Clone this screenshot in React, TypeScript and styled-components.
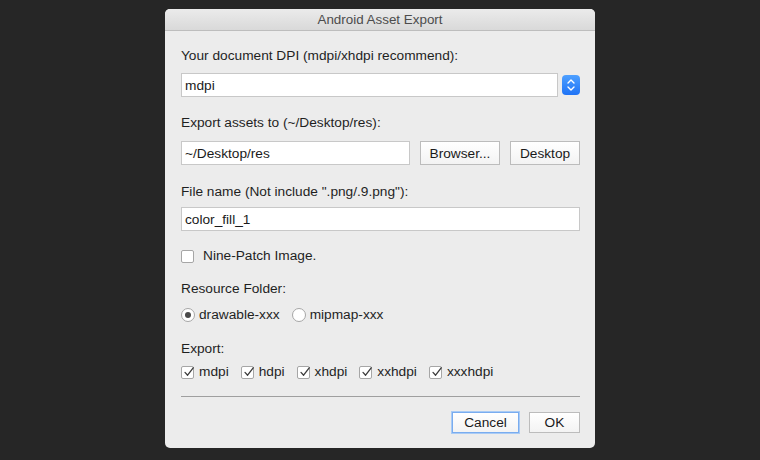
import React from 'react';
import styled, {createGlobalStyle} from 'styled-components';

const GlobalStyle = createGlobalStyle`
  html, body {
    margin: 0;
    padding: 0;
    background: #262626;
    height: 460px;
    overflow: hidden;
  }
  body {
    font-family: "Liberation Sans", Arial, sans-serif;
  }
`;

const Page = styled.div`
  display: flex;
  justify-content: center;
  padding-top: 9px;
`;

const Dialog = styled.div`
  width: 430px;
  height: 439px;
  background: #ececec;
  border-radius: 5px;
  overflow: hidden;
  display: flex;
  flex-direction: column;
`;

const TitleBar = styled.div`
  height: 21px;
  background: linear-gradient(#ebebeb, #d9d9d9);
  border-bottom: 1px solid #bdbdbd;
  display: flex;
  align-items: center;
  justify-content: center;
  font-size: 13.4px;
  color: #4c4c4c;
`;

const Body = styled.div`
  padding: 0 15px 0 16px;
  display: flex;
  flex-direction: column;
  color: #1f1f1f;
  font-size: 13.7px;
`;

const Label = styled.div<{$top: number}>`
  margin-top: ${p => p.$top}px;
  line-height: 16px;
  height: 16px;
`;

const Row = styled.div<{$top: number}>`
  margin-top: ${p => p.$top}px;
  display: flex;
  align-items: center;
`;

const TextField = styled.div<{$width?: number}>`
  box-sizing: border-box;
  height: 24px;
  ${p => (p.$width ? `width: ${p.$width}px;` : 'flex: 1;')}
  background: #fff;
  border: 1px solid #c8c8c8;
  padding: 0 3px;
  display: flex;
  align-items: center;
  color: #1a1a1a;
`;

const Stepper = styled.div`
  width: 18px;
  height: 20px;
  margin-left: 4px;
  border-radius: 4px;
  background: linear-gradient(#4ea0ff, #1f73f5);
  display: flex;
  align-items: center;
  justify-content: center;
`;

const PushButton = styled.div<{$width: number; $height?: number; $focus?: boolean}>`
  box-sizing: border-box;
  width: ${p => p.$width}px;
  height: ${p => p.$height || 24}px;
  background: linear-gradient(#ffffff, #f3f3f3);
  border: 1px solid ${p => (p.$focus ? '#79acef' : '#bcbcbc')};
  box-shadow: ${p => (p.$focus ? '0 0 0 1px #a9cbf5' : 'none')};
  display: flex;
  align-items: center;
  justify-content: center;
  color: #1a1a1a;
`;

const CheckItem = styled.div<{$gap?: number}>`
  display: flex;
  align-items: center;
  margin-right: ${p => p.$gap ?? 0}px;
`;

const Box = styled.div`
  box-sizing: border-box;
  width: 13px;
  height: 13px;
  border: 1px solid #a6a6a6;
  border-radius: 2px;
  background: #fff;
  position: relative;
`;

const Radio = styled.div<{$on?: boolean}>`
  box-sizing: border-box;
  width: 14px;
  height: 14px;
  border: 1px solid #a6a6a6;
  border-radius: 50%;
  background: #fff;
  display: flex;
  align-items: center;
  justify-content: center;
  &::after {
    content: '';
    display: ${p => (p.$on ? 'block' : 'none')};
    width: 6px;
    height: 6px;
    border-radius: 50%;
    background: #4a4a4a;
  }
`;

const ItemText = styled.span<{$gap: number}>`
  margin-left: ${p => p.$gap}px;
  line-height: 16px;
`;

const Separator = styled.div`
  margin-top: 16px;
  height: 1px;
  background: #9f9f9f;
`;

const Footer = styled.div`
  margin-top: 15px;
  display: flex;
  justify-content: flex-end;
  gap: 10px;
`;

function Check({checked}: {checked?: boolean}) {
  return (
    <Box>
      {checked && (
        <svg width="12" height="12" viewBox="0 0 12 12" style={{position: 'absolute', left: 1, top: -1}}>
          <path d="M2 6.4 L4.6 9.2 L10.2 1.8" fill="none" stroke="#3c3c3c" strokeWidth="1.3" strokeLinecap="round" strokeLinejoin="round"/>
        </svg>
      )}
    </Box>
  );
}

const densities = ['mdpi', 'hdpi', 'xhdpi', 'xxhdpi', 'xxxhdpi'];

export default function App() {
  return (
    <Page>
      <GlobalStyle/>
      <Dialog>
        <TitleBar>Android Asset Export</TitleBar>
        <Body>
          <Label $top={17}>Your document DPI (mdpi/xhdpi recommend):</Label>
          <Row $top={9}>
            <TextField>mdpi</TextField>
            <Stepper>
              <svg width="10" height="14" viewBox="0 0 10 14">
                <path d="M2 5 L5 2 L8 5 M2 9 L5 12 L8 9" fill="none" stroke="#fff" strokeWidth="1.4" strokeLinecap="round" strokeLinejoin="round"/>
              </svg>
            </Stepper>
          </Row>

          <Label $top={18}>Export assets to (~/Desktop/res):</Label>
          <Row $top={10}>
            <TextField $width={229}>~/Desktop/res</TextField>
            <PushButton $width={80} style={{marginLeft: 10}}>Browser...</PushButton>
            <PushButton $width={70} style={{marginLeft: 10}}>Desktop</PushButton>
          </Row>

          <Label $top={19}>File name (Not include ".png/.9.png"):</Label>
          <Row $top={7}>
            <TextField>color_fill_1</TextField>
          </Row>

          <Row $top={17}>
            <CheckItem>
              <Check/>
              <ItemText $gap={9}>Nine-Patch Image.</ItemText>
            </CheckItem>
          </Row>

          <Label $top={17}>Resource Folder:</Label>
          <Row $top={10}>
            <CheckItem $gap={12}>
              <Radio $on/>
              <ItemText $gap={4}>drawable-xxx</ItemText>
            </CheckItem>
            <CheckItem>
              <Radio/>
              <ItemText $gap={4}>mipmap-xxx</ItemText>
            </CheckItem>
          </Row>

          <Label $top={18}>Export:</Label>
          <Row $top={7}>
            {densities.map(d => (
              <CheckItem key={d} $gap={12}>
                <Check checked/>
                <ItemText $gap={5}>{d}</ItemText>
              </CheckItem>
            ))}
          </Row>

          <Separator/>

          <Footer>
            <PushButton $width={67} $height={21} $focus>Cancel</PushButton>
            <PushButton $width={51} $height={21}>OK</PushButton>
          </Footer>
        </Body>
      </Dialog>
    </Page>
  );
}
